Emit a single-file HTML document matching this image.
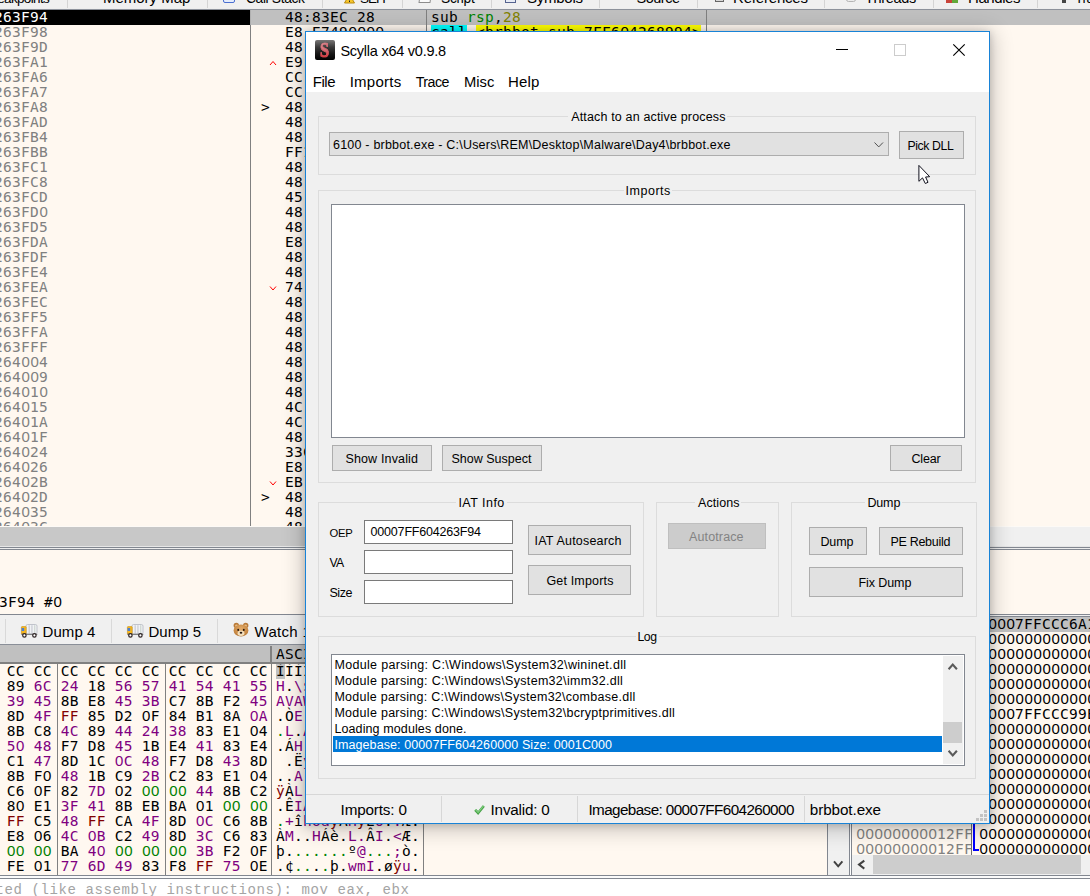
<!DOCTYPE html>
<html lang="en">
<head>
<meta charset="utf-8">
<title>Scylla x64 v0.9.8</title>
<style>
html,body{margin:0;padding:0}
body{width:1090px;height:896px;overflow:hidden;position:relative;background:#fff8f0;font-family:"Liberation Sans",sans-serif;color:#000;font-size:12.5px}
.b{position:absolute;box-sizing:border-box}
.t{position:absolute;white-space:pre;line-height:20px}
.m{font-family:"DejaVu Sans Mono","Liberation Mono",monospace;font-size:14.5px;letter-spacing:0.27px}
.z{font-family:"Liberation Sans",sans-serif;font-size:15px;letter-spacing:0.66px;line-height:0;position:relative;left:0.4px}
.c{font-family:"Liberation Mono",monospace;font-size:14px;letter-spacing:0.6px}
.clip{position:absolute;overflow:hidden}
.btn{background:#e1e1e1;border:1px solid #adadad}
.grp{border:1px solid #dcdcdc}
.ed{background:#fff;border:1px solid #7a7a7a}
.g{color:#008000}.p{color:#800080}.r{color:#800000}
svg{position:absolute;overflow:visible}
</style>
</head>
<body>
<div class="b" style="left:0px;top:0px;width:1090px;height:9px;background:#f0f0f0;"></div>
<div class="b" style="left:0px;top:8px;width:1090px;height:1px;background:#eeeeee;"></div>
<div class="b" style="left:0px;top:9px;width:1090px;height:1px;background:#8d929b;"></div>
<div class="b" style="left:67px;top:0px;width:1px;height:8px;background:#d4d4d4;"></div>
<div class="b" style="left:207px;top:0px;width:1px;height:8px;background:#d4d4d4;"></div>
<div class="b" style="left:322px;top:0px;width:1px;height:8px;background:#d4d4d4;"></div>
<div class="b" style="left:402px;top:0px;width:1px;height:8px;background:#d4d4d4;"></div>
<div class="b" style="left:491px;top:0px;width:1px;height:8px;background:#d4d4d4;"></div>
<div class="b" style="left:599px;top:0px;width:1px;height:8px;background:#d4d4d4;"></div>
<div class="b" style="left:697px;top:0px;width:1px;height:8px;background:#d4d4d4;"></div>
<div class="b" style="left:824px;top:0px;width:1px;height:8px;background:#d4d4d4;"></div>
<div class="b" style="left:933px;top:0px;width:1px;height:8px;background:#d4d4d4;"></div>
<div class="b" style="left:1037px;top:0px;width:1px;height:8px;background:#d4d4d4;"></div>
<div class="clip" style="left:0;top:0;width:1090px;height:8px">
<span class="t" style="left:-15.0px;top:-11px;font-size:13.5px;letter-spacing:-0.654px;">Breakpoints</span>
<span class="t" style="left:103.0px;top:-12px;font-size:15px;letter-spacing:-0.019px;">Memory Map</span>
<span class="t" style="left:246.0px;top:-11px;font-size:13.75px;letter-spacing:-0.336px;">Call Stack</span>
<span class="t" style="left:360.0px;top:-11px;font-size:13.5px;letter-spacing:-1.004px;">SEH</span>
<span class="t" style="left:441.0px;top:-11px;font-size:13.75px;letter-spacing:-0.265px;">Script</span>
<span class="t" style="left:527.0px;top:-12px;font-size:15px;letter-spacing:-0.253px;">Symbols</span>
<span class="t" style="left:636.5px;top:-12px;font-size:14.5px;letter-spacing:-0.476px;">Source</span>
<span class="t" style="left:733.0px;top:-12px;font-size:15px;letter-spacing:-0.190px;">References</span>
<span class="t" style="left:865.0px;top:-12px;font-size:14.5px;letter-spacing:-0.324px;">Threads</span>
<span class="t" style="left:968.0px;top:-12px;font-size:15px;letter-spacing:-0.422px;">Handles</span>
<span class="t" style="left:1075.0px;top:-11px;font-size:13.75px;letter-spacing:-0.497px;">Trace</span>
<div class="b" style="left:223px;top:-3px;width:12px;height:6px;background:#e4ecfc;border:1px solid #4a6fd0;border-radius:2px"></div>
<svg style="left:344px;top:-6px" width="11" height="10"><path d="M5.5 0.5 L10.5 9 L0.5 9 Z" fill="#f7c62a" stroke="#b88a10" stroke-width="1"/><rect x="5" y="6.5" width="1" height="1.5" fill="#222"/></svg>
<div class="b" style="left:419px;top:-5px;width:12px;height:8px;background:#fafafa;border:1px solid #8d8d8d;transform:skewX(-8deg)"></div>
<div class="b" style="left:505px;top:-4px;width:11px;height:7px;background:#e8ecf5;border:1px solid #55638f;"></div>
<div class="b" style="left:715px;top:-3px;width:9px;height:5px;background:#d8d8d8;border:1px solid #666;"></div>
<div class="b" style="left:846px;top:-3px;width:10px;height:5px;background:#ececec;border:1px solid #b5b5b5;border-radius:3px"></div>
<div class="b" style="left:946px;top:-3px;width:6px;height:6px;background:#c8433a;"></div>
<div class="b" style="left:952px;top:-3px;width:6px;height:6px;background:#62a83a;"></div>
<div class="b" style="left:1062px;top:-3px;width:4px;height:6px;background:#444;"></div>
</div>
<div class="b" style="left:0px;top:10px;width:250px;height:15px;background:#000;"></div>
<div class="b" style="left:250px;top:10px;width:840px;height:15px;background:#c0c0c0;"></div>
<div class="clip" style="left:0;top:10px;width:1090px;height:517px">
<span class="t m" style="left:-6.0px;top:-3px;color:#fff;">263F94</span>
<span class="t m" style="left:285.0px;top:-3px;">48:83EC 28</span>
<span class="t m" style="left:-6.0px;top:12px;color:#808080;">263F98</span>
<span class="t m" style="left:285.0px;top:12px;">E8 E749<span class="z">0000</span></span>
<span class="t m" style="left:-6.0px;top:27px;color:#808080;">263F9D</span>
<span class="t m" style="left:285.0px;top:27px;">48:83C4 28</span>
<span class="t m" style="left:-6.0px;top:42px;color:#808080;">263FA1</span>
<span class="t m" style="left:285.0px;top:42px;">E9 <span class="z">0</span>2<span class="z">000000</span></span>
<span class="t m" style="left:-6.0px;top:57px;color:#808080;">263FA6</span>
<span class="t m" style="left:285.0px;top:57px;">CC</span>
<span class="t m" style="left:-6.0px;top:72px;color:#808080;">263FA7</span>
<span class="t m" style="left:285.0px;top:72px;">CC</span>
<span class="t m" style="left:-6.0px;top:87px;color:#808080;">263FA8</span>
<span class="t m" style="left:285.0px;top:87px;">48:895C24 <span class="z">0</span>8</span>
<span class="t m" style="left:-6.0px;top:102px;color:#808080;">263FAD</span>
<span class="t m" style="left:285.0px;top:102px;">48:896C24 1<span class="z">0</span></span>
<span class="t m" style="left:-6.0px;top:117px;color:#808080;">263FB4</span>
<span class="t m" style="left:285.0px;top:117px;">48:897424 18</span>
<span class="t m" style="left:-6.0px;top:132px;color:#808080;">263FBB</span>
<span class="t m" style="left:285.0px;top:132px;">FF15 6E4C<span class="z">0000</span></span>
<span class="t m" style="left:-6.0px;top:147px;color:#808080;">263FC1</span>
<span class="t m" style="left:285.0px;top:147px;">48:8BD8</span>
<span class="t m" style="left:-6.0px;top:162px;color:#808080;">263FC8</span>
<span class="t m" style="left:285.0px;top:162px;">48:8BF9</span>
<span class="t m" style="left:-6.0px;top:177px;color:#808080;">263FCD</span>
<span class="t m" style="left:285.0px;top:177px;">45:33C<span class="z">0</span></span>
<span class="t m" style="left:-6.0px;top:192px;color:#808080;">263FD<span class="z">0</span></span>
<span class="t m" style="left:285.0px;top:192px;">48:8D5424 4<span class="z">0</span></span>
<span class="t m" style="left:-6.0px;top:207px;color:#808080;">263FD5</span>
<span class="t m" style="left:285.0px;top:207px;">48:8BCB</span>
<span class="t m" style="left:-6.0px;top:222px;color:#808080;">263FDA</span>
<span class="t m" style="left:285.0px;top:222px;">E8 216<span class="z">00000</span></span>
<span class="t m" style="left:-6.0px;top:237px;color:#808080;">263FDF</span>
<span class="t m" style="left:285.0px;top:237px;">48:85C<span class="z">0</span></span>
<span class="t m" style="left:-6.0px;top:252px;color:#808080;">263FE4</span>
<span class="t m" style="left:285.0px;top:252px;">48:8B4C24 38</span>
<span class="t m" style="left:-6.0px;top:267px;color:#808080;">263FEA</span>
<span class="t m" style="left:285.0px;top:267px;">74 36</span>
<span class="t m" style="left:-6.0px;top:282px;color:#808080;">263FEC</span>
<span class="t m" style="left:285.0px;top:282px;">48:8364 2438 <span class="z">00</span></span>
<span class="t m" style="left:-6.0px;top:297px;color:#808080;">263FF5</span>
<span class="t m" style="left:285.0px;top:297px;">48:8D4C24 4<span class="z">0</span></span>
<span class="t m" style="left:-6.0px;top:312px;color:#808080;">263FFA</span>
<span class="t m" style="left:285.0px;top:312px;">48:8B5424 4<span class="z">0</span></span>
<span class="t m" style="left:-6.0px;top:327px;color:#808080;">263FFF</span>
<span class="t m" style="left:285.0px;top:327px;">48:8BF8</span>
<span class="t m" style="left:-6.0px;top:342px;color:#808080;">264<span class="z">00</span>4</span>
<span class="t m" style="left:285.0px;top:342px;">48:894C24 3<span class="z">0</span></span>
<span class="t m" style="left:-6.0px;top:357px;color:#808080;">264<span class="z">00</span>9</span>
<span class="t m" style="left:285.0px;top:357px;">48:8D4C24 48</span>
<span class="t m" style="left:-6.0px;top:372px;color:#808080;">264<span class="z">0</span>1<span class="z">0</span></span>
<span class="t m" style="left:285.0px;top:372px;">48:894C24 28</span>
<span class="t m" style="left:-6.0px;top:387px;color:#808080;">264<span class="z">0</span>15</span>
<span class="t m" style="left:285.0px;top:387px;">4C:8BC8</span>
<span class="t m" style="left:-6.0px;top:402px;color:#808080;">264<span class="z">0</span>1A</span>
<span class="t m" style="left:285.0px;top:402px;">4C:8BC3</span>
<span class="t m" style="left:-6.0px;top:417px;color:#808080;">264<span class="z">0</span>1F</span>
<span class="t m" style="left:285.0px;top:417px;">48:897C24 2<span class="z">0</span></span>
<span class="t m" style="left:-6.0px;top:432px;color:#808080;">264<span class="z">0</span>24</span>
<span class="t m" style="left:285.0px;top:432px;">33C9</span>
<span class="t m" style="left:-6.0px;top:447px;color:#808080;">264<span class="z">0</span>26</span>
<span class="t m" style="left:285.0px;top:447px;">E8 DB5F<span class="z">0000</span></span>
<span class="t m" style="left:-6.0px;top:462px;color:#808080;">264<span class="z">0</span>2B</span>
<span class="t m" style="left:285.0px;top:462px;">EB <span class="z">0</span>2</span>
<span class="t m" style="left:-6.0px;top:477px;color:#808080;">264<span class="z">0</span>2D</span>
<span class="t m" style="left:285.0px;top:477px;">48:8BD7</span>
<span class="t m" style="left:-6.0px;top:492px;color:#808080;">264<span class="z">0</span>35</span>
<span class="t m" style="left:285.0px;top:492px;">48:8D<span class="z">0</span>D 84DE<span class="z">0000</span></span>
<span class="t m" style="left:-6.0px;top:507px;color:#808080;">264<span class="z">0</span>3C</span>
<span class="t m" style="left:285.0px;top:507px;">48:8BCE</span>
<div class="b" style="left:250px;top:15px;width:1px;height:502px;background:#808080;"></div>
<div class="b" style="left:426px;top:15px;width:1px;height:502px;background:#808080;"></div>
<div class="b" style="left:706px;top:15px;width:1px;height:502px;background:#808080;"></div>
<div class="b" style="left:250px;top:0px;width:1px;height:15px;background:#b0b0b0;"></div>
<div class="b" style="left:426px;top:0px;width:1px;height:15px;background:#808080;"></div>
<div class="b" style="left:706px;top:0px;width:1px;height:15px;background:#808080;"></div>
<span class="t m" style="left:431px;top:-3px">sub <span style="color:#008300">rsp</span>,<span style="color:#828200">28</span></span>
<div class="b" style="left:431px;top:15px;width:36px;height:15px;background:#00ffff;"></div>
<div class="b" style="left:476px;top:15px;width:225px;height:15px;background:#ffff00;"></div>
<span class="t m" style="left:431.0px;top:12px;">call &lt;brbbot.sub_7FF6<span class="z">0</span>4268994&gt;</span>
<span class="t m" style="left:261.0px;top:87px;">&gt;</span>
<span class="t m" style="left:261.0px;top:477px;">&gt;</span>
<svg style="left:269.5px;top:51px" width="7" height="5"><polyline points="0,4 3,0.5 6,4" fill="none" stroke="#ff0000" stroke-width="1"/></svg>
<svg style="left:269.5px;top:276px" width="7" height="5"><polyline points="0,0.5 3,4 6,0.5" fill="none" stroke="#ff0000" stroke-width="1"/></svg>
<svg style="left:269.5px;top:471px" width="7" height="5"><polyline points="0,0.5 3,4 6,0.5" fill="none" stroke="#ff0000" stroke-width="1"/></svg>
</div>
<div class="b" style="left:0px;top:527px;width:990px;height:19px;background:#c8c8c8;"></div>
<div class="b" style="left:990px;top:527px;width:100px;height:19px;background:#f0f0f0;"></div>
<div class="b" style="left:0px;top:526px;width:1090px;height:1px;background:#fdfaf6;"></div>
<div class="b" style="left:0px;top:546px;width:1090px;height:1px;background:#e6e6e6;"></div>
<div class="b" style="left:0px;top:547px;width:1090px;height:1px;background:#828790;"></div>
<div class="b" style="left:0px;top:548px;width:1090px;height:1px;background:#ececec;"></div>
<div class="b" style="left:0px;top:549px;width:1090px;height:1px;background:#828790;"></div>
<span class="t m" style="left:-1.0px;top:592px;">3F94 #<span class="z">0</span></span>
<div class="b" style="left:0px;top:614px;width:849px;height:1px;background:#828790;"></div>
<div class="b" style="left:0px;top:615px;width:849px;height:29px;background:#f0f0f0;"></div>
<div class="b" style="left:5px;top:619px;width:1px;height:24px;background:#d9d9d9;"></div>
<div class="b" style="left:111px;top:619px;width:1px;height:24px;background:#d9d9d9;"></div>
<div class="b" style="left:217px;top:619px;width:1px;height:24px;background:#d9d9d9;"></div>
<div class="b" style="left:0px;top:644px;width:849px;height:1px;background:#8a8f98;"></div>
<span class="t" style="left:42.6px;top:622px;font-size:15px;letter-spacing:0.044px;">Dump 4</span>
<span class="t" style="left:148.4px;top:622px;font-size:15px;letter-spacing:0.044px;">Dump 5</span>
<span class="t" style="left:254.5px;top:622px;font-size:15px;letter-spacing:0.313px;">Watch 1</span>
<svg style="left:21px;top:624px" width="17" height="14" viewBox="0 0 17 14"><rect x="5" y="0.5" width="11" height="9.6" rx="1.6" fill="#f1f2f5" stroke="#b4b8c0" stroke-width="0.8"/><rect x="7.6" y="1.2" width="1.1" height="8.6" fill="#c3c7cf"/><rect x="10.4" y="1.2" width="1.1" height="8.6" fill="#c3c7cf"/><rect x="13.2" y="1.2" width="1.1" height="8.6" fill="#c9d3cc"/><rect x="0.4" y="2.6" width="4.8" height="7.4" rx="0.6" fill="#f7b71f" stroke="#c98f12" stroke-width="0.6"/><rect x="0.6" y="4" width="2.6" height="3" fill="#4c7fd0"/><rect x="0.3" y="9.8" width="16" height="1" fill="#6a6a6a"/><circle cx="3.4" cy="11.4" r="1.7" fill="#fff" stroke="#2e2424" stroke-width="1.2"/><circle cx="13.4" cy="11.4" r="1.7" fill="#fff" stroke="#2e2424" stroke-width="1.2"/></svg>
<svg style="left:127px;top:624px" width="17" height="14" viewBox="0 0 17 14"><rect x="5" y="0.5" width="11" height="9.6" rx="1.6" fill="#f1f2f5" stroke="#b4b8c0" stroke-width="0.8"/><rect x="7.6" y="1.2" width="1.1" height="8.6" fill="#c3c7cf"/><rect x="10.4" y="1.2" width="1.1" height="8.6" fill="#c3c7cf"/><rect x="13.2" y="1.2" width="1.1" height="8.6" fill="#c9d3cc"/><rect x="0.4" y="2.6" width="4.8" height="7.4" rx="0.6" fill="#f7b71f" stroke="#c98f12" stroke-width="0.6"/><rect x="0.6" y="4" width="2.6" height="3" fill="#4c7fd0"/><rect x="0.3" y="9.8" width="16" height="1" fill="#6a6a6a"/><circle cx="3.4" cy="11.4" r="1.7" fill="#fff" stroke="#2e2424" stroke-width="1.2"/><circle cx="13.4" cy="11.4" r="1.7" fill="#fff" stroke="#2e2424" stroke-width="1.2"/></svg>
<svg style="left:232.5px;top:622px" width="16" height="15" viewBox="0 0 16 15"><defs><radialGradient id="dg" cx="0.5" cy="0.35" r="0.75"><stop offset="0" stop-color="#e3ad6c"/><stop offset="0.7" stop-color="#c4843f"/><stop offset="1" stop-color="#9a6128"/></radialGradient></defs><circle cx="3.3" cy="3.4" r="2.7" fill="#b97a38"/><circle cx="12.7" cy="3.4" r="2.7" fill="#b97a38"/><circle cx="3.5" cy="3.8" r="1.4" fill="#e9c08a"/><circle cx="12.5" cy="3.8" r="1.4" fill="#e9c08a"/><ellipse cx="8" cy="8.6" rx="7.4" ry="6" fill="url(#dg)"/><ellipse cx="8" cy="11.3" rx="3.4" ry="2.7" fill="#f3dfbd"/><ellipse cx="5.2" cy="7.9" rx="0.95" ry="1.1" fill="#2a1a10"/><ellipse cx="10.8" cy="7.9" rx="0.95" ry="1.1" fill="#2a1a10"/><ellipse cx="8" cy="10.7" rx="1.3" ry="1" fill="#2a1a10"/></svg>
<div class="b" style="left:0px;top:645px;width:828px;height:17px;background:#c0c0c0;"></div>
<div class="b" style="left:0px;top:662px;width:828px;height:2px;background:#808080;"></div>
<div class="b" style="left:270px;top:646px;width:2px;height:16px;background:#808080;"></div>
<span class="t m" style="left:276.0px;top:644px;">ASCII</span>
<div class="clip" style="left:0;top:664px;width:828px;height:211px">
<div class="b" style="left:276px;top:0px;width:9px;height:15px;background:#c0c0c0;"></div>
<span class="t m" style="left:6.7px;top:-3px">CC CC CC CC CC CC CC CC CC CC</span>
<span class="t m" style="left:276px;top:-3px">ÌÌÌÌÌÌÌÌÌÌÌÌÌÌÌÌ</span>
<span class="t m" style="left:6.7px;top:12px">89 <span class="p">6C 24 </span>18 <span class="p">56 57 41 54 41 55</span></span>
<span class="t m" style="left:276px;top:12px"><span class="p">H</span>.<span class="p">\$</span>.<span class="p">H</span>.<span class="p">l$</span>.<span class="p">VWATAU</span></span>
<span class="t m" style="left:6.7px;top:27px"><span class="p">39 45 </span>8B E8 <span class="p">45 3B </span>C7 8B F2 <span class="p">45</span></span>
<span class="t m" style="left:276px;top:27px"><span class="p">AVAWH</span>.<span class="p">9E</span>.è<span class="p">E;</span>Ç.ò<span class="p">E</span></span>
<span class="t m" style="left:6.7px;top:42px">8D <span class="p">4F </span><span class="r">FF </span>85 D2 <span class="z">0</span>F 84 B1 8A <span class="p"><span class="z">0</span>A</span></span>
<span class="t m" style="left:276px;top:42px">.Ò<span class="p">E;H</span>..<span class="p">O</span><span class="r">ÿ</span>.Ò..±.<span class="p">.</span></span>
<span class="t m" style="left:6.7px;top:57px">8B C8 <span class="p">4C </span>89 <span class="p">44 24 38 </span>83 E1 <span class="z">0</span>4</span>
<span class="t m" style="left:276px;top:57px"><span class="g">.</span><span class="p">L</span>.<span class="p">A</span><span class="r">ÿ</span>Á.È<span class="p">L</span>.<span class="p">D$8</span>.á.</span>
<span class="t m" style="left:6.7px;top:72px"><span class="p">5<span class="z">0</span> 48 </span>F7 D8 <span class="p">45 </span>1B E4 <span class="p">41 </span>83 E4</span>
<span class="t m" style="left:276px;top:72px">.Á<span class="p">H</span>.<span class="p">L$PH</span>÷Ø<span class="p">E</span>.ä<span class="p">A</span>.ä</span>
<span class="t m" style="left:6.7px;top:87px">C1 <span class="p">47 </span>8D 1C <span class="p"><span class="z">0</span>C 48 </span>F7 D8 <span class="p">43 </span>8D</span>
<span class="t m" style="left:276px;top:87px"><span class="p"> </span>.Ë<span class="p">yH</span>.Á<span class="p">G</span>..<span class="p">.H</span>÷Ø<span class="p">C</span>.</span>
<span class="t m" style="left:6.7px;top:102px">8B F<span class="z">0</span> <span class="p">48 </span>1B C9 <span class="p">2B </span>C2 83 E1 <span class="z">0</span>4</span>
<span class="t m" style="left:276px;top:102px">..<span class="p">A-H</span>..ð<span class="p">H</span>.É<span class="p">+</span>Â.á.</span>
<span class="t m" style="left:6.7px;top:117px">C6 <span class="z">0</span>F 82 <span class="p">7D </span><span class="z">0</span>2 <span class="g"><span class="z">00</span> <span class="z">00</span> </span><span class="p">44 </span>8B C2</span>
<span class="t m" style="left:276px;top:117px"><span class="r">ÿ</span>À<span class="p">L-H</span>.Æ..<span class="p">}</span>.<span class="g">..</span><span class="p">D</span>.Â</span>
<span class="t m" style="left:6.7px;top:132px">8<span class="z">0</span> E1 <span class="p">3F 41 </span>8B EB BA <span class="z">0</span>1 <span class="g"><span class="z">00</span> <span class="z">00</span></span></span>
<span class="t m" style="left:276px;top:132px">.Ê<span class="p">IA</span>.Ä.á<span class="p">?A</span>.ëº.<span class="g">..</span></span>
<span class="t m" style="left:6.7px;top:147px"><span class="r">FF </span>C5 <span class="p">48 </span><span class="r">FF </span>CA <span class="p">4F </span>8D <span class="p"><span class="z">0</span>C </span>C6 8B</span>
<span class="t m" style="left:276px;top:147px"><span class="g">.</span><span class="p">+</span>î<span class="p">hoa</span><span class="r">ÿ</span>Å<span class="p">H</span><span class="r">ÿ</span>Ê<span class="p">O</span>.<span class="p">.</span>Æ.</span>
<span class="t m" style="left:6.7px;top:162px">E8 <span class="z">0</span>6 <span class="p">4C <span class="z">0</span>B </span>C2 <span class="p">49 </span>8D <span class="p">3C </span>C6 83</span>
<span class="t m" style="left:276px;top:162px">À<span class="p">M</span>..<span class="p">H</span>Áè.<span class="p">L.</span>Â<span class="p">I</span>.<span class="p">&lt;</span>Æ.</span>
<span class="t m" style="left:6.7px;top:177px"><span class="g"><span class="z">00</span> <span class="z">00</span> </span>BA <span class="p">4<span class="z">0</span> </span><span class="g"><span class="z">00</span> <span class="z">00</span> <span class="z">00</span> </span><span class="p">3B </span>F2 <span class="z">0</span>F</span>
<span class="t m" style="left:276px;top:177px">þ.<span class="g">......</span>º<span class="p">@</span><span class="g">...</span><span class="p">;</span>ò.</span>
<span class="t m" style="left:6.7px;top:192px">FE <span class="z">0</span>1 <span class="p">77 6D 49 </span>83 F8 <span class="r">FF </span><span class="p">75 </span><span class="z">0</span>E</span>
<span class="t m" style="left:276px;top:192px">.¢<span class="g">..</span>.<span class="g">.</span>þ.<span class="p">wmI</span>.ø<span class="r">ÿ</span><span class="p">u</span>.</span>
<div class="b" style="left:57px;top:0px;width:1px;height:211px;background:#808080;"></div>
<div class="b" style="left:165px;top:0px;width:1px;height:211px;background:#808080;"></div>
<div class="b" style="left:271px;top:0px;width:1px;height:211px;background:#808080;"></div>
<div class="b" style="left:423px;top:0px;width:1px;height:211px;background:#808080;"></div>
</div>
<div class="b" style="left:827px;top:645px;width:1px;height:230px;background:#828790;"></div>
<div class="b" style="left:828px;top:645px;width:21px;height:230px;background:#f0f0f0;"></div>
<svg style="left:833px;top:860px" width="11" height="9"><polyline points="1,1.3 5.2,6.3 9.4,1.3" fill="none" stroke="#404040" stroke-width="2"/></svg>
<div class="b" style="left:849px;top:550px;width:1px;height:325px;background:#828790;"></div>
<div class="b" style="left:850px;top:550px;width:1px;height:328px;background:#ffffff;"></div>
<div class="b" style="left:851px;top:550px;width:1px;height:325px;background:#828790;"></div>
<div class="b" style="left:852px;top:614px;width:238px;height:1px;background:#828790;"></div>
<div class="b" style="left:852px;top:615px;width:238px;height:1px;background:#f0f0f0;"></div>
<div class="b" style="left:852px;top:616px;width:238px;height:1px;background:#828790;"></div>
<div class="b" style="left:852px;top:617px;width:238px;height:15px;background:#c0c0c0;"></div>
<div class="clip" style="left:852px;top:617px;width:238px;height:238px">
<div class="clip" style="left:0;top:0;width:119px;height:238px">
<span class="t m" style="left:4.0px;top:-3px;color:#808080;"><span class="z">000000000</span>12FFB38</span>
<span class="t m" style="left:4.0px;top:12px;color:#808080;"><span class="z">000000000</span>12FFB4<span class="z">0</span></span>
<span class="t m" style="left:4.0px;top:27px;color:#808080;"><span class="z">000000000</span>12FFB48</span>
<span class="t m" style="left:4.0px;top:42px;color:#808080;"><span class="z">000000000</span>12FFB5<span class="z">0</span></span>
<span class="t m" style="left:4.0px;top:57px;color:#808080;"><span class="z">000000000</span>12FFB58</span>
<span class="t m" style="left:4.0px;top:72px;color:#808080;"><span class="z">000000000</span>12FFB6<span class="z">0</span></span>
<span class="t m" style="left:4.0px;top:87px;color:#808080;"><span class="z">000000000</span>12FFB68</span>
<span class="t m" style="left:4.0px;top:102px;color:#808080;"><span class="z">000000000</span>12FFB7<span class="z">0</span></span>
<span class="t m" style="left:4.0px;top:117px;color:#808080;"><span class="z">000000000</span>12FFB78</span>
<span class="t m" style="left:4.0px;top:132px;color:#808080;"><span class="z">000000000</span>12FFB8<span class="z">0</span></span>
<span class="t m" style="left:4.0px;top:147px;color:#808080;"><span class="z">000000000</span>12FFB88</span>
<span class="t m" style="left:4.0px;top:162px;color:#808080;"><span class="z">000000000</span>12FFB9<span class="z">0</span></span>
<span class="t m" style="left:4.0px;top:177px;color:#808080;"><span class="z">000000000</span>12FFB98</span>
<span class="t m" style="left:4.0px;top:192px;color:#808080;"><span class="z">000000000</span>12FFBA<span class="z">0</span></span>
<span class="t m" style="left:4.0px;top:207px;color:#808080;"><span class="z">000000000</span>12FFBA8</span>
<span class="t m" style="left:4.0px;top:222px;color:#808080;"><span class="z">000000000</span>12FFBB<span class="z">0</span></span>
</div>
<span class="t m" style="left:127.0px;top:-3px;"><span class="z">0000</span>7FFCCC6A13D2</span>
<span class="t m" style="left:127.0px;top:12px;"><span class="z">0000000000000000</span></span>
<span class="t m" style="left:127.0px;top:27px;"><span class="z">0000000000000000</span></span>
<span class="t m" style="left:127.0px;top:42px;"><span class="z">0000000000000000</span></span>
<span class="t m" style="left:127.0px;top:57px;"><span class="z">0000000000000000</span></span>
<span class="t m" style="left:127.0px;top:72px;"><span class="z">0000000000000000</span></span>
<span class="t m" style="left:127.0px;top:87px;"><span class="z">0000</span>7FFCCC99E611</span>
<span class="t m" style="left:127.0px;top:102px;"><span class="z">0000000000000000</span></span>
<span class="t m" style="left:127.0px;top:117px;"><span class="z">0000000000000000</span></span>
<span class="t m" style="left:127.0px;top:132px;"><span class="z">0000000000000000</span></span>
<span class="t m" style="left:127.0px;top:147px;"><span class="z">0000000000000000</span></span>
<span class="t m" style="left:127.0px;top:162px;"><span class="z">0000000000000000</span></span>
<span class="t m" style="left:127.0px;top:177px;"><span class="z">0000000000000000</span></span>
<span class="t m" style="left:127.0px;top:192px;"><span class="z">0000000000000000</span></span>
<span class="t m" style="left:127.0px;top:207px;"><span class="z">0000000000000000</span></span>
<span class="t m" style="left:127.0px;top:222px;"><span class="z">0000000000000000</span></span>
<div class="b" style="left:119px;top:0px;width:1px;height:238px;background:#707070;"></div>
<div class="b" style="left:121px;top:0px;width:2px;height:234px;background:#0000ff;"></div>
<div class="b" style="left:121px;top:232px;width:6px;height:2px;background:#0000ff;"></div>
</div>
<div class="b" style="left:852px;top:855px;width:238px;height:20px;background:#f0f0f0;"></div>
<div class="b" style="left:873px;top:855px;width:208px;height:19px;background:#cdcdcd;"></div>
<svg style="left:857px;top:860px" width="9" height="10"><polyline points="7.3,0.6 2,4.6 7.3,8.6" fill="none" stroke="#404040" stroke-width="2"/></svg>
<div class="b" style="left:0px;top:875px;width:1090px;height:1px;background:#828790;"></div>
<div class="b" style="left:0px;top:876px;width:1090px;height:2px;background:#fbfbfb;"></div>
<div class="b" style="left:0px;top:878px;width:1090px;height:1px;background:#828790;"></div>
<div class="b" style="left:0px;top:879px;width:1090px;height:17px;background:#ffffff;"></div>
<span class="t c" style="left:-4.5px;top:880px;color:#a4a4a4;">ted (like assembly instructions): mov eax, ebx</span>
<div class="b" style="left:305px;top:31px;width:685px;height:793px;background:#f0f0f0;border:1px solid #1883d7;box-shadow:0 1px 7px rgba(0,0,0,0.16),0 3px 20px 2px rgba(0,0,0,0.24)"></div>
<div class="b" style="left:306px;top:32px;width:683px;height:60px;background:#ffffff;"></div>
<div class="b" style="left:315px;top:40px;width:20px;height:20px;border-radius:2px;background:linear-gradient(#787676,#3b3a3a 35%,#151515 70%,#000);overflow:hidden"><span style="position:absolute;left:4.6px;top:-2.5px;font:bold 21px/24px 'Liberation Serif',serif;background:linear-gradient(#dbabb0 18%,#d2646c 55%,#e62222 82%);-webkit-background-clip:text;background-clip:text;color:transparent;-webkit-text-stroke:0.7px rgba(214,90,100,0.85);transform:scaleX(0.78);transform-origin:0 0">S</span></div>
<span class="t" style="left:340.4px;top:41px;font-size:14.5px;letter-spacing:-0.241px;">Scylla x64 v0.9.8</span>
<div class="b" style="left:836px;top:49px;width:12px;height:1px;background:#000;"></div>
<div class="b" style="left:894px;top:44px;width:12px;height:12px;border:1px solid #cccccc;"></div>
<svg style="left:953px;top:44px" width="12" height="12"><path d="M0.3 0.3 L11.7 11.7 M11.7 0.3 L0.3 11.7" stroke="#000" stroke-width="1.15" fill="none"/></svg>
<span class="t" style="left:312.7px;top:72px;font-size:15px;letter-spacing:-0.409px;">File</span>
<span class="t" style="left:349.7px;top:72px;font-size:15px;letter-spacing:0.248px;">Imports</span>
<span class="t" style="left:415.7px;top:72px;font-size:14.25px;letter-spacing:-0.518px;">Trace</span>
<span class="t" style="left:464.0px;top:72px;font-size:14.75px;letter-spacing:-0.013px;">Misc</span>
<span class="t" style="left:508.1px;top:72px;font-size:15px;letter-spacing:0.131px;">Help</span>
<div class="b grp" style="left:318px;top:116px;width:658px;height:59px;"></div>
<div class="b" style="left:568.2px;top:116px;width:159px;height:1px;background:#f0f0f0;"></div>
<span class="t" style="left:571.2px;top:107px;letter-spacing:0.160px;">Attach to an active process</span>
<div class="b grp" style="left:318px;top:190px;width:658px;height:293px;"></div>
<div class="b" style="left:623.5px;top:190px;width:48.6px;height:1px;background:#f0f0f0;"></div>
<span class="t" style="left:625.5px;top:181px;letter-spacing:0.529px;">Imports</span>
<div class="b grp" style="left:318px;top:502px;width:326px;height:115px;"></div>
<div class="b" style="left:456.4px;top:502px;width:50.2px;height:1px;background:#f0f0f0;"></div>
<span class="t" style="left:458.4px;top:493px;letter-spacing:0.473px;">IAT Info</span>
<div class="b grp" style="left:656px;top:502px;width:123px;height:115px;"></div>
<div class="b" style="left:695px;top:502px;width:46.2px;height:1px;background:#f0f0f0;"></div>
<span class="t" style="left:698.0px;top:493px;letter-spacing:0.076px;">Actions</span>
<div class="b grp" style="left:791px;top:502px;width:186px;height:115px;"></div>
<div class="b" style="left:865.4px;top:502px;width:37px;height:1px;background:#f0f0f0;"></div>
<span class="t" style="left:867.4px;top:493px;letter-spacing:-0.131px;">Dump</span>
<div class="b grp" style="left:318px;top:636px;width:658px;height:143px;"></div>
<div class="b" style="left:635.5px;top:636px;width:23.7px;height:1px;background:#f0f0f0;"></div>
<span class="t" style="left:637.5px;top:627px;font-size:12.25px;letter-spacing:-0.463px;">Log</span>
<div class="b" style="left:329px;top:132px;width:560px;height:24px;background:#e1e1e1;border:1px solid #adadad;"></div>
<span class="t" style="left:333.0px;top:135px;letter-spacing:0.210px;">6100 - brbbot.exe - C:\Users\REM\Desktop\Malware\Day4\brbbot.exe</span>
<svg style="left:874px;top:142px" width="10" height="6"><polyline points="0.5,0.5 4.75,4.9 9,0.5" fill="none" stroke="#505050" stroke-width="1"/></svg>
<div class="b btn" style="left:899px;top:131px;width:65px;height:28px;"></div>
<span class="t" style="left:907.4px;top:136px;font-size:12.25px;letter-spacing:-0.372px;">Pick DLL</span>
<div class="b" style="left:331px;top:204px;width:634px;height:234px;background:#ffffff;border:1px solid #828790;"></div>
<div class="b btn" style="left:332px;top:445px;width:100px;height:26px;"></div>
<span class="t" style="left:345.4px;top:449px;letter-spacing:0.153px;">Show Invalid</span>
<div class="b btn" style="left:442px;top:445px;width:100px;height:26px;"></div>
<span class="t" style="left:451.4px;top:449px;letter-spacing:0.015px;">Show Suspect</span>
<div class="b btn" style="left:890px;top:445px;width:72px;height:26px;"></div>
<span class="t" style="left:911.4px;top:449px;letter-spacing:-0.127px;">Clear</span>
<span class="t" style="left:329.4px;top:523px;font-size:11.25px;letter-spacing:-0.227px;">OEP</span>
<span class="t" style="left:329.4px;top:553px;font-size:12.25px;letter-spacing:-0.661px;">VA</span>
<span class="t" style="left:329.4px;top:583px;letter-spacing:-0.388px;">Size</span>
<div class="b ed" style="left:364px;top:520px;width:149px;height:24px;"></div>
<div class="b ed" style="left:364px;top:550px;width:149px;height:24px;"></div>
<div class="b ed" style="left:364px;top:580px;width:149px;height:24px;"></div>
<span class="t" style="left:370.6px;top:522px;letter-spacing:-0.195px;">00007FF604263F94</span>
<div class="b btn" style="left:528px;top:525px;width:103px;height:30px;"></div>
<span class="t" style="left:534.6px;top:531px;letter-spacing:0.195px;">IAT Autosearch</span>
<div class="b btn" style="left:528px;top:565px;width:103px;height:30px;"></div>
<span class="t" style="left:546.4px;top:571px;letter-spacing:0.175px;">Get Imports</span>
<div class="b" style="left:668px;top:523px;width:98px;height:26px;background:#cccccc;border:1px solid #bfbfbf;"></div>
<span class="t" style="left:689.0px;top:527px;letter-spacing:0.131px;color:#838383;">Autotrace</span>
<div class="b btn" style="left:809px;top:527px;width:58px;height:28px;"></div>
<span class="t" style="left:820.4px;top:532px;letter-spacing:-0.064px;">Dump</span>
<div class="b btn" style="left:879px;top:527px;width:84px;height:28px;"></div>
<span class="t" style="left:890.4px;top:532px;letter-spacing:-0.287px;">PE Rebuild</span>
<div class="b btn" style="left:809px;top:567px;width:154px;height:30px;"></div>
<span class="t" style="left:858.4px;top:573px;letter-spacing:-0.075px;">Fix Dump</span>
<div class="b" style="left:331px;top:654px;width:634px;height:112px;background:#ffffff;border:1px solid #828790;"></div>
<div class="b" style="left:333px;top:736px;width:609px;height:16px;background:#0078d7;"></div>
<span class="t" style="left:334.4px;top:655px;letter-spacing:0.330px;">Module parsing: C:\Windows\System32\wininet.dll</span>
<span class="t" style="left:334.4px;top:671px;letter-spacing:0.302px;">Module parsing: C:\Windows\System32\imm32.dll</span>
<span class="t" style="left:334.4px;top:687px;letter-spacing:0.273px;">Module parsing: C:\Windows\System32\combase.dll</span>
<span class="t" style="left:334.4px;top:703px;letter-spacing:0.290px;">Module parsing: C:\Windows\System32\bcryptprimitives.dll</span>
<span class="t" style="left:334.4px;top:719px;letter-spacing:0.111px;">Loading modules done.</span>
<span class="t" style="left:334.4px;top:735px;letter-spacing:0.094px;color:#fff;">Imagebase: 00007FF604260000 Size: 0001C000</span>
<div class="b" style="left:943px;top:656px;width:20px;height:108px;background:#f0f0f0;"></div>
<div class="b" style="left:943px;top:722px;width:19px;height:21px;background:#cdcdcd;"></div>
<svg style="left:948px;top:663px" width="10" height="7"><polyline points="0.6,6.2 4.75,1.6 8.9,6.2" fill="none" stroke="#5a5a5a" stroke-width="2.1"/></svg>
<svg style="left:948px;top:750px" width="10" height="7"><polyline points="0.6,0.8 4.75,5.4 8.9,0.8" fill="none" stroke="#5a5a5a" stroke-width="2.1"/></svg>
<div class="b" style="left:306px;top:794px;width:683px;height:1px;background:#d7d7d7;"></div>
<div class="b" style="left:441px;top:796px;width:1px;height:26px;background:#d7d7d7;"></div>
<div class="b" style="left:577px;top:796px;width:1px;height:26px;background:#d7d7d7;"></div>
<div class="b" style="left:804px;top:796px;width:1px;height:26px;background:#d7d7d7;"></div>
<span class="t" style="left:340.6px;top:800px;font-size:15.25px;letter-spacing:-0.169px;">Imports: 0</span>
<span class="t" style="left:490.6px;top:800px;font-size:15.25px;letter-spacing:-0.206px;">Invalid: 0</span>
<span class="t" style="left:588.4px;top:800px;font-size:15.25px;letter-spacing:-0.589px;">Imagebase: 00007FF604260000</span>
<span class="t" style="left:809.8px;top:800px;font-size:15.25px;letter-spacing:-0.087px;">brbbot.exe</span>
<svg style="left:474px;top:804px" width="11" height="11"><path d="M1.2 5.8 L4.1 9 L9.8 2" fill="none" stroke="#48a248" stroke-width="2.7"/><path d="M1.5 5.7 L4.1 8.4 L9.5 1.9" fill="none" stroke="#7fcf7f" stroke-width="1.1"/></svg>
<svg style="left:976px;top:810px" width="12" height="12"><rect x="8" y="0" width="3" height="3" fill="#c2c2c2"/><rect x="4" y="4" width="3" height="3" fill="#c2c2c2"/><rect x="8" y="4" width="3" height="3" fill="#c2c2c2"/><rect x="0" y="8" width="3" height="3" fill="#c2c2c2"/><rect x="4" y="8" width="3" height="3" fill="#c2c2c2"/><rect x="8" y="8" width="3" height="3" fill="#c2c2c2"/></svg>
<svg style="left:917.5px;top:163.8px" width="14" height="21" viewBox="0 0 14 21"><path d="M0.9 1.4 L0.9 17.3 L4.5 13.9 L7.3 19.5 L10 18.3 L7.6 13 L11.7 12.7 Z" fill="#fff" stroke="#10101c" stroke-width="1" stroke-linejoin="round"/></svg>
</body>
</html>
